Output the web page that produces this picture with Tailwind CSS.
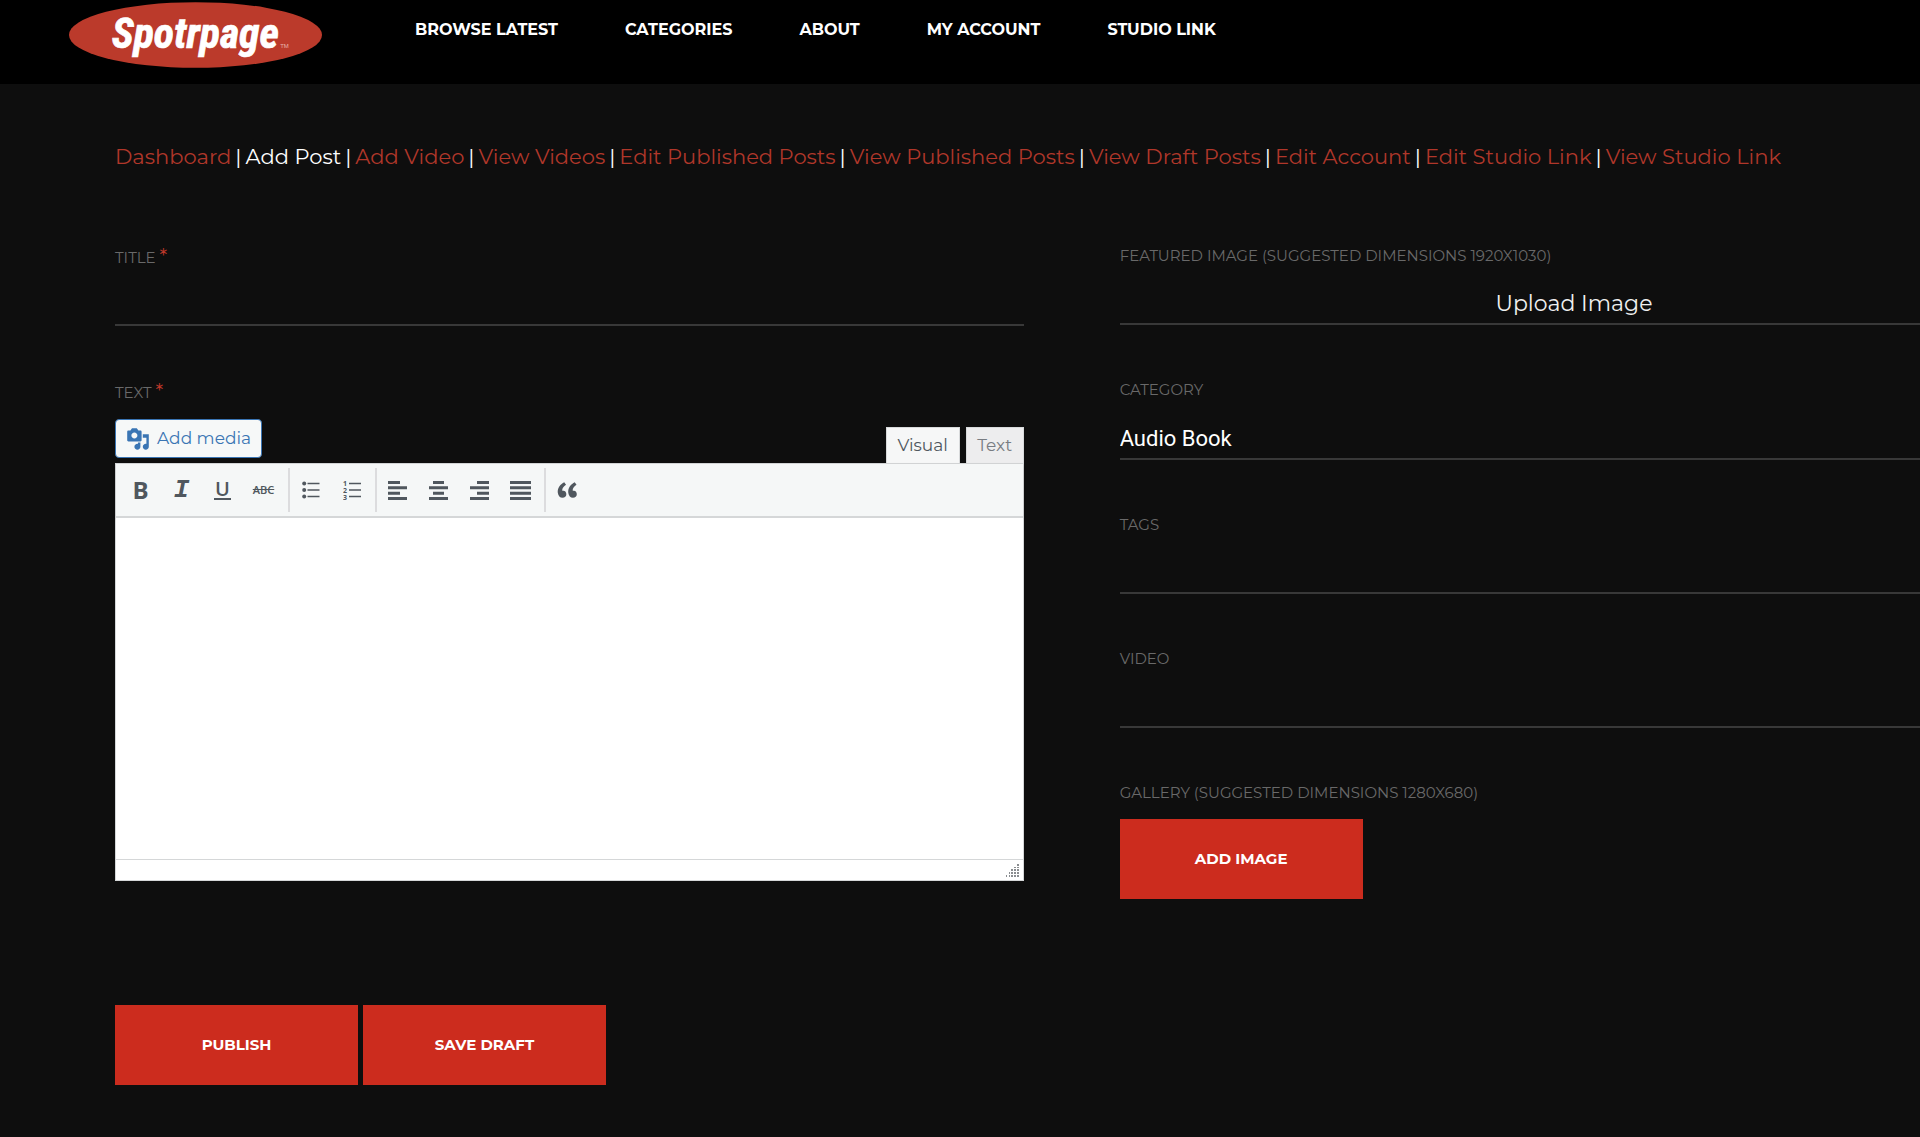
<!DOCTYPE html>
<html lang="en">
<head>
<meta charset="utf-8">
<meta name="viewport" content="width=device-width, initial-scale=1">
<title>Spotrpage – Add Post</title>
<script src="https://cdn.jsdelivr.net/npm/@tailwindcss/browser@4"></script>
</head>
<body class="min-h-screen overflow-x-hidden bg-[#0e0e0e] font-['Montserrat','Inter',sans-serif] text-white">

<header class="flex h-[84px] items-start bg-black pl-[69px]">
  <a href="#" class="mt-[2px] block" aria-label="Spotrpage home">
    <svg width="253" height="66" viewBox="0 0 254 66">
      <ellipse cx="127" cy="33" rx="127" ry="33" fill="#bb3a2b"/>
      <text x="43" y="46" font-family="'Liberation Sans Narrow','Roboto Condensed','Liberation Sans',sans-serif" font-size="42" font-weight="700" font-style="italic" fill="#fff" stroke="#fff" stroke-width=".7">Spotrpage</text>
      <text x="212" y="46" font-family="'Liberation Sans',sans-serif" font-size="6" fill="#e8b5ad">TM</text>
    </svg>
  </a>
  <nav class="ml-[93px] mt-[18px] flex gap-[67px] text-base font-bold leading-6 whitespace-nowrap">
    <a href="#">BROWSE LATEST</a>
    <a href="#">CATEGORIES</a>
    <a href="#">ABOUT</a>
    <a href="#">MY ACCOUNT</a>
    <a href="#">STUDIO LINK</a>
  </nav>
</header>

<main class="overflow-hidden pl-[115px] pt-[57px]">
  <nav class="flex h-8 items-center gap-1 text-[21px] leading-8 whitespace-nowrap text-[#b0372a]">
    <a href="#">Dashboard</a><span class="text-white">|</span>
    <a href="#" class="text-white">Add Post</a><span class="text-white">|</span>
    <a href="#">Add Video</a><span class="text-white">|</span>
    <a href="#">View Videos</a><span class="text-white">|</span>
    <a href="#">Edit Published Posts</a><span class="text-white">|</span>
    <a href="#">View Published Posts</a><span class="text-white">|</span>
    <a href="#">View Draft Posts</a><span class="text-white">|</span>
    <a href="#">Edit Account</a><span class="text-white">|</span>
    <a href="#">Edit Studio Link</a><span class="text-white">|</span>
    <a href="#">View Studio Link</a>
  </nav>

  <form class="mt-[73px]">
    <div class="grid w-[106%] grid-cols-2 items-start gap-24">
      <div class="flex flex-col gap-[55px]">
        <div class="flex flex-col">
          <label for="title" class="h-5 text-[15px] leading-6 text-[#696969]">TITLE <span class="align-top text-xl leading-5 text-[#c0392b]">*</span></label>
          <input id="title" type="text" class="h-[60px] w-full border-b-2 border-[#383838] bg-transparent text-[22px] outline-none">
        </div>
        <div class="flex flex-col">
          <label for="body" class="h-5 text-[15px] leading-6 text-[#696969]">TEXT <span class="align-top text-xl leading-5 text-[#c0392b]">*</span></label>
          <div class="mt-[18px] flex h-11 items-start justify-between">
            <button type="button" class="flex h-[39px] items-center gap-[7px] rounded-[4px] border border-[#3a75b4] bg-[#f6f8f8] px-[10px] text-[17px] text-[#3a75b4]">
              <svg width="24" height="24" viewBox="0 0 20 20" fill="currentColor"><path d="M13 11V4c0-.55-.45-1-1-1h-1.67L9 1H5L3.67 3H2c-.55 0-1 .45-1 1v7c0 .55.45 1 1 1h10c.55 0 1-.45 1-1zM7 4.5c1.38 0 2.5 1.12 2.5 2.5S8.38 9.5 7 9.5 4.5 8.38 4.5 7 5.62 4.5 7 4.5zM14 6h5v10.5c0 1.38-1.12 2.5-2.5 2.5S14 17.88 14 16.5s1.12-2.5 2.5-2.5c.17 0 .34.02.5.05V9h-3V6zm-4 8.05V13h2v3.5c0 1.38-1.12 2.5-2.5 2.5S7 17.88 7 16.5 8.12 14 9.5 14c.17 0 .34.02.5.05z"/></svg>
              Add media
            </button>
            <div class="mt-2 flex gap-[6px] text-[17px]">
              <button type="button" class="h-9 w-[74px] border border-b-0 border-[#d8dadb] bg-[#f6f7f7] text-[#50575e]">Visual</button>
              <button type="button" class="h-9 w-[58px] border border-b-0 border-[#d8dadb] bg-[#ededee] text-[#787c82]">Text</button>
            </div>
          </div>
          <div class="border border-[#d5d7d8] bg-white">
            <div class="flex h-[54px] items-stretch border-b-2 border-[#d5d7d8] bg-[#f5f7f7] py-1 text-[#50575e] shadow-sm">
              <div class="flex border-r-2 border-[#dcdcde] px-1">
                <button type="button" class="w-[41px] font-['Open_Sans',sans-serif] text-2xl font-bold leading-10">B</button>
                <button type="button" class="w-[41px] font-['Liberation_Mono',monospace] text-[26px] font-bold italic leading-[44px]">I</button>
                <button type="button" class="flex w-[41px] items-center justify-center"><span class="border-b-2 border-current px-px font-['Open_Sans',sans-serif] text-xl font-semibold leading-[18px]">U</span></button>
                <button type="button" class="w-[41px] font-['Open_Sans',sans-serif] text-[11px] font-semibold leading-10 line-through">ABC</button>
              </div>
              <div class="flex border-r-2 border-[#dcdcde] pr-[3px]">
                <button type="button" class="flex w-[41px] items-center justify-center" aria-label="Bulleted list">
                  <svg width="18" height="18" viewBox="0 0 18 18" fill="currentColor"><circle cx="2.2" cy="2.5" r="2"/><circle cx="2.2" cy="9" r="2"/><circle cx="2.2" cy="15.500" r="2"/><path d="M5.500 1.800h12v1.400h-12zM5.500 8.300h12v1.400h-12zM5.500 14.800h12v1.400h-12z"/></svg>
                </button>
                <button type="button" class="flex w-[41px] items-center justify-center" aria-label="Numbered list">
                  <svg width="18" height="24" viewBox="0 0 18 24" fill="currentColor"><path d="M6 4.800h12v1.400H6zM6 11.300h12v1.400H6zM6 17.800h12v1.400H6z"/><g font-family="'Open Sans',sans-serif" font-size="7" font-weight="700"><text x="0" y="8">1</text><text x="0" y="15">2</text><text x="0" y="22">3</text></g></svg>
                </button>
              </div>
              <div class="flex border-r-2 border-[#dcdcde] pr-[3px]">
                <button type="button" class="flex w-[41px] items-center justify-center" aria-label="Align left">
                  <svg width="19" height="19" fill="currentColor"><path d="M0 0h12v3H0zM0 5.300h19v3H0zM0 10.700h12v3H0zM0 16h19v3H0z"/></svg>
                </button>
                <button type="button" class="flex w-[41px] items-center justify-center" aria-label="Align center">
                  <svg width="19" height="19" fill="currentColor"><path d="M4 0h11v3H4zM0 5.300h19v3H0zM4 10.700h11v3H4zM0 16h19v3H0z"/></svg>
                </button>
                <button type="button" class="flex w-[41px] items-center justify-center" aria-label="Align right">
                  <svg width="19" height="19" fill="currentColor"><path d="M7 0h12v3H7zM0 5.300h19v3H0zM7 10.700h12v3H7zM0 16h19v3H0z"/></svg>
                </button>
                <button type="button" class="flex w-[41px] items-center justify-center" aria-label="Justify">
                  <svg width="21" height="19" fill="currentColor"><path d="M0 0h21v3H0zM0 5.300h21v3H0zM0 10.700h21v3H0zM0 16h21v3H0z"/></svg>
                </button>
              </div>
              <button type="button" class="flex w-[41px] items-center justify-center" aria-label="Blockquote">
                <svg width="26" height="26" viewBox="0 0 20 20" fill="currentColor"><path d="M9.49 13.22c0-.74-.2-1.38-.61-1.9-.62-.78-1.83-.88-2.53-.72-.29-1.65 1.11-3.75 2.92-4.65L7.88 4c-2.73 1.3-5.42 4.28-4.96 8.05C3.21 14.43 4.59 16 6.54 16c.85 0 1.56-.25 2.12-.75s.83-1.18.83-2.03zm8.05 0c0-.74-.2-1.38-.61-1.9-.63-.78-1.83-.88-2.53-.72-.29-1.65 1.11-3.75 2.92-4.65L15.93 4c-2.73 1.3-5.41 4.28-4.95 8.05.29 2.38 1.66 3.95 3.61 3.95.85 0 1.56-.25 2.12-.75s.83-1.18.83-2.03z"/></svg>
              </button>
            </div>
            <textarea id="body" class="block h-[341px] w-full resize-none bg-white p-3 text-black outline-none"></textarea>
            <div class="flex h-[21px] items-end justify-end border-t border-[#d5d7d8] pb-[3px] pr-1">
              <svg width="13" height="13" fill="#8a8d90"><path d="M11 0h2v2h-2zM8 3h2v1H8zM11 3h2v1h-2zM5 5h2v2H5zM8 5h2v2H8zM11 5h2v2h-2zM3 8h1v2H3zM5 8h2v2H5zM8 8h2v2H8zM11 8h2v2h-2zM0 11h1v2H0zM3 11h1v2H3zM5 11h2v2H5zM8 11h2v2H8zM11 11h2v2h-2z"/></svg>
            </div>
          </div>
        </div>
      </div>

      <div class="flex flex-col gap-[55px]">
        <div class="flex flex-col">
          <label for="featured" class="h-5 text-[15px] leading-5 text-[#696969]">FEATURED IMAGE (SUGGESTED DIMENSIONS 1920X1030)</label>
          <button id="featured" type="button" class="h-[59px] w-full border-b-2 border-[#383838] pt-[18px] text-[22px] text-[#f0f0f0]">Upload Image</button>
        </div>
        <div class="flex flex-col">
          <label for="category" class="h-5 text-[15px] leading-5 text-[#696969]">CATEGORY</label>
          <select id="category" class="h-[60px] w-full appearance-none border-b-2 border-[#383838] bg-transparent pt-[18px] font-['Roboto',sans-serif] text-[22px] outline-none"><option>Audio Book</option></select>
        </div>
        <div class="flex flex-col">
          <label for="tags" class="h-5 text-[15px] leading-5 text-[#696969]">TAGS</label>
          <input id="tags" type="text" class="h-[59px] w-full border-b-2 border-[#383838] bg-transparent text-[22px] outline-none">
        </div>
        <div class="flex flex-col">
          <label for="video" class="h-5 text-[15px] leading-5 text-[#696969]">VIDEO</label>
          <input id="video" type="text" class="h-[59px] w-full border-b-2 border-[#383838] bg-transparent text-[22px] outline-none">
        </div>
        <div class="flex flex-col items-start">
          <label for="gallery" class="h-5 text-[15px] leading-5 text-[#696969]">GALLERY (SUGGESTED DIMENSIONS 1280X680)</label>
          <button id="gallery" type="button" class="mt-4 h-20 w-[243px] bg-[#cc2c1e] text-[15px] font-bold">ADD IMAGE</button>
        </div>
      </div>
    </div>

    <div class="mt-[106px] flex gap-[5px] text-[15px] font-bold">
      <button type="submit" class="h-20 w-[243px] bg-[#cc2c1e]">PUBLISH</button>
      <button type="button" class="h-20 w-[243px] bg-[#cc2c1e]">SAVE DRAFT</button>
    </div>
  </form>
</main>
</body>
</html>
